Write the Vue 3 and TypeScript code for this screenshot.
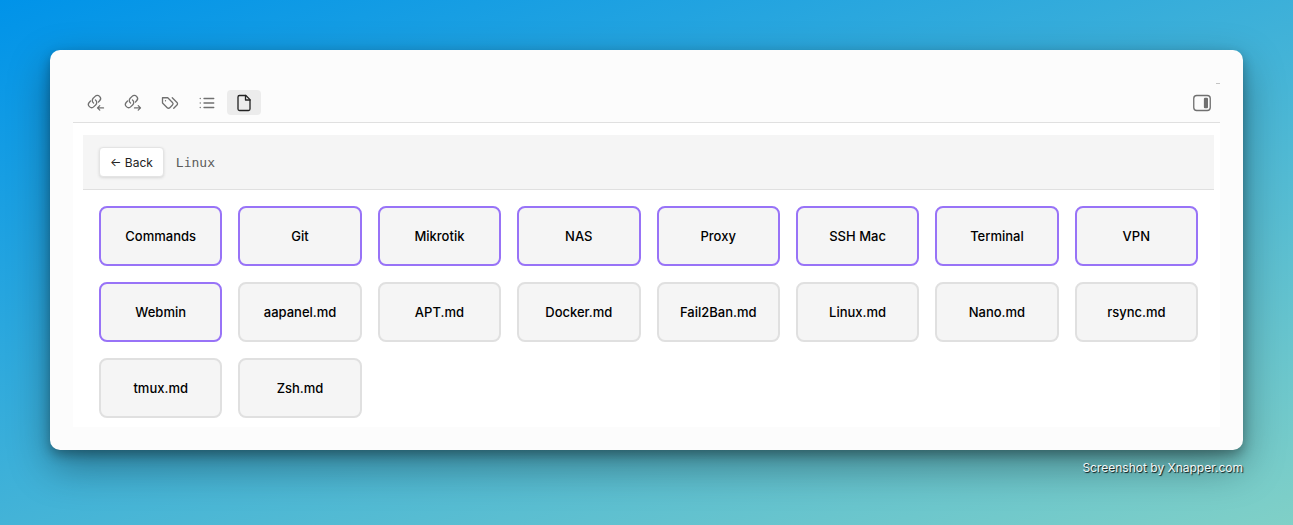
<script setup lang="ts">
interface Entry {
  name: string
  folder: boolean
}

const folders = ['Commands', 'Git', 'Mikrotik', 'NAS', 'Proxy', 'SSH Mac', 'Terminal', 'VPN', 'Webmin']
const files = ['aapanel.md', 'APT.md', 'Docker.md', 'Fail2Ban.md', 'Linux.md', 'Nano.md', 'rsync.md', 'tmux.md', 'Zsh.md']

const entries: Entry[] = [
  ...folders.map((name) => ({ name, folder: true })),
  ...files.map((name) => ({ name, folder: false })),
]
</script>

<template>
  <div class="backdrop">
    <main class="window">
      <section class="pane">
        <header class="toolbar">
          <nav class="tabs">
            <button class="tab" type="button" aria-label="Backlinks">
              <svg class="icon" viewBox="0 0 24 24">
                <path d="M8.7 12a4.2 4.2 0 0 1-.45-6.3l2.55-2.5a4.2 4.2 0 0 1 6 5.9l-1.5 1.5" />
                <path d="M11.3 8a4.2 4.2 0 0 1 .45 6.3l-2.55 2.5a4.2 4.2 0 0 1-6-5.9l1.5-1.5" />
                <path d="M22 18.5h-8M17 15.5l-3 3 3 3" />
              </svg>
            </button>
            <button class="tab" type="button" aria-label="Outgoing links">
              <svg class="icon" viewBox="0 0 24 24">
                <path d="M8.7 12a4.2 4.2 0 0 1-.45-6.3l2.55-2.5a4.2 4.2 0 0 1 6 5.9l-1.5 1.5" />
                <path d="M11.3 8a4.2 4.2 0 0 1 .45 6.3l-2.55 2.5a4.2 4.2 0 0 1-6-5.9l1.5-1.5" />
                <path d="M14 18.5h8M19 15.5l3 3-3 3" />
              </svg>
            </button>
            <button class="tab" type="button" aria-label="Tags">
              <svg class="icon" viewBox="0 0 24 24">
                <path d="M9 5H2v7l6.29 6.29c.94.94 2.48.94 3.42 0l3.58-3.58c.94-.94.94-2.48 0-3.42L9 5Z" />
                <path d="M6 9.01V9" />
                <path d="m15 5 6.3 6.3a2.4 2.4 0 0 1 0 3.4L17 19" />
              </svg>
            </button>
            <button class="tab" type="button" aria-label="Outline">
              <svg class="icon" viewBox="0 0 24 24">
                <path d="M8 6h13M8 12h13M8 18h13M3 6h.01M3 12h.01M3 18h.01" />
              </svg>
            </button>
            <button class="tab active" type="button" aria-label="Files">
              <svg class="icon" viewBox="0 0 24 24">
                <path d="M14.5 2H6a2 2 0 0 0-2 2v16a2 2 0 0 0 2 2h12a2 2 0 0 0 2-2V7.5L14.5 2z" />
                <path d="M14 2v6h6" />
              </svg>
            </button>
          </nav>
          <button class="tab" type="button" aria-label="Toggle sidebar">
            <svg class="icon" viewBox="0 0 24 24">
              <rect x="1" y="2" width="22" height="20" rx="4" />
              <rect class="solid" x="14.5" y="5" width="5.5" height="14" rx="1.5" />
            </svg>
          </button>
        </header>

        <div class="content">
          <div class="path-bar">
            <button class="back" type="button">← Back</button>
            <span class="path">Linux</span>
          </div>
          <div class="grid">
            <button
              v-for="entry in entries"
              :key="entry.name"
              class="tile"
              :class="{ folder: entry.folder }"
              type="button"
            >
              {{ entry.name }}
            </button>
          </div>
        </div>
      </section>
    </main>
    <footer class="credit">Screenshot by Xnapper.com</footer>
  </div>
</template>

<style>
body {
  margin: 0;
}
</style>

<style scoped>
.backdrop {
  box-sizing: border-box;
  min-height: 100vh;
  padding: 50px 50px 0;
  background: linear-gradient(160deg, #0093e9 0%, #80d0c7 100%);
  font-family: Inter, "Liberation Sans", sans-serif;
}

button {
  margin: 0;
  font-family: inherit;
  cursor: pointer;
}

.window {
  padding: 33px 23px 23px;
  border-radius: 10px;
  background: #fcfcfc;
  box-shadow: 0 16px 40px rgba(0, 0, 0, 0.36), 0 5px 12px rgba(0, 0, 0, 0.3);
}

.pane {
  position: relative;
}

.pane::before {
  content: "";
  position: absolute;
  top: 0;
  right: 0;
  width: 4px;
  height: 1px;
  background: #c4c4c4;
}

.toolbar {
  display: flex;
  align-items: center;
  justify-content: space-between;
  padding: 7px 1px 7px 6px;
  border-bottom: 1px solid #e0e0e0;
}

.tabs {
  display: flex;
  gap: 3px;
}

.tab {
  display: flex;
  align-items: center;
  justify-content: center;
  width: 34px;
  height: 25px;
  padding: 0;
  border: 0;
  border-radius: 4px;
  background: transparent;
  color: #707070;
}

.tab.active {
  background: #ececec;
  color: #222222;
}

.icon {
  width: 18px;
  height: 18px;
  fill: none;
  stroke: currentColor;
  stroke-width: 1.75;
  stroke-linecap: round;
  stroke-linejoin: round;
}

.solid {
  fill: currentColor;
  stroke: none;
}

.content {
  padding: 12px 6px 9px 10px;
  background: #ffffff;
}

.path-bar {
  display: flex;
  align-items: center;
  gap: 12px;
  padding: 12px 16px;
  border-bottom: 1px solid #e0e0e0;
  background: #f5f5f5;
}

.back {
  height: 30px;
  padding: 0 10px;
  border: 1px solid #e4e4e4;
  border-radius: 4px;
  background: #ffffff;
  box-shadow: 0 1px 3px rgba(0, 0, 0, 0.12);
  color: #222222;
  font-size: 12px;
}

.path {
  color: #5c5c5c;
  font-family: "DejaVu Sans Mono", monospace;
  font-size: 13px;
}

.grid {
  display: grid;
  grid-template-columns: repeat(auto-fill, minmax(120px, 1fr));
  gap: 16px;
  padding: 16px 16px 0;
}

.tile {
  height: 60px;
  padding: 0 8px;
  border: 2px solid #e0e0e0;
  border-radius: 8px;
  background: #f5f5f5;
  color: #000000;
  font-size: 13px;
  font-weight: 500;
}

.tile.folder {
  border-color: #9873f7;
}

.credit {
  margin-top: 10px;
  color: #f0f8f8;
  font-size: 12px;
  line-height: 16px;
  text-align: right;
  text-shadow: 1px 1px 1px rgba(0, 0, 0, 0.9);
}
</style>
